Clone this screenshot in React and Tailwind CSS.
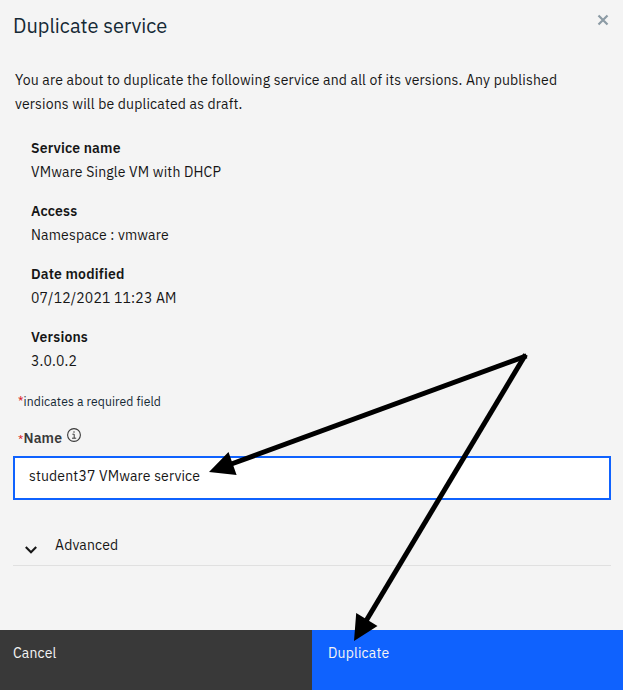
const details = [
  { label: 'Service name', value: 'VMware Single VM with DHCP' },
  { label: 'Access', value: 'Namespace : vmware' },
  { label: 'Date modified', value: '07/12/2021 11:23 AM' },
  { label: 'Versions', value: '3.0.0.2' },
];

function CloseIcon() {
  return (
    <svg className="size-3" viewBox="0 0 12 12" fill="none" stroke="#8c9ba5" strokeWidth="2.2">
      <path d="M1.5 1.5 10.5 10.5M10.5 1.5 1.5 10.5" />
    </svg>
  );
}

function InfoIcon() {
  return (
    <svg className="size-[14px]" viewBox="0 0 14 14" fill="none" stroke="#393939">
      <circle cx="7" cy="7" r="6.4" strokeWidth="1.1" />
      <path d="M5.4 6.2H7.2V10.2M5 10.2H9.2" strokeWidth="1" />
      <circle cx="7" cy="3.9" r="0.75" fill="#393939" stroke="none" />
    </svg>
  );
}

function ChevronIcon() {
  return (
    <svg className="h-2 w-3" viewBox="0 0 12 8" fill="none" stroke="#161616" strokeWidth="2.1">
      <path d="M0.8 1.1 6 6.3 11.2 1.1" />
    </svg>
  );
}

function Arrows() {
  return (
    <svg className="pointer-events-none absolute inset-0 h-[690px] w-[623px]" viewBox="0 0 623 690">
      <g stroke="#000" strokeWidth="5" fill="none">
        <path d="M526.5 355.8 230 464.5" />
        <path d="M525.6 354.5 366 621" />
      </g>
      <path d="M209 472 228.5 452 236.6 475ZM354 641 356.2 613 377.5 626Z" fill="#000" />
    </svg>
  );
}

export default function App() {
  return (
    <div className="relative flex h-[690px] w-[623px] flex-col overflow-hidden bg-[#f4f4f4] font-['IBM_Plex_Sans','Roboto','Liberation_Sans',sans-serif] text-sm tracking-[0.16px] text-[#161616]">
      <header className="flex h-[68px] items-start justify-between pt-[13px] pr-[14px] pl-[13px]">
        <h1 className="text-xl leading-[26px] tracking-normal text-[#152935]">Duplicate service</h1>
        <button type="button" aria-label="Close" className="mt-[1px]"><CloseIcon /></button>
      </header>

      <main className="flex grow flex-col pr-3 pl-[13px]">
        <p className="pl-0.5 leading-6 whitespace-nowrap">
          You are about to duplicate the following service and all of its versions. Any published
          <br />
          versions will be duplicated as draft.
        </p>

        <dl className="mt-5 flex flex-col gap-[15px] pl-[18px] leading-6">
          {details.map((d) => (
            <div key={d.label}>
              <dt className="font-semibold">{d.label}</dt>
              <dd>{d.value}</dd>
            </div>
          ))}
        </dl>

        <p className="mt-5 pl-[5px] text-[12.2px] leading-4 tracking-[0.09px] text-[#152935]">
          <span className="text-[#da1e28]">*</span>indicates a required field
        </p>

        <div className="mt-[19px] flex h-5 pl-[5px] leading-5">
          <label className="w-[45px] font-semibold whitespace-nowrap text-[#393939]">
            <span className="text-xs font-normal tracking-normal text-[#da1e28]">*</span>Name
          </label>
          <span className="ml-1"><InfoIcon /></span>
        </div>

        <div className="mt-[8px] flex h-11 items-center border-2 border-[#0f62fe] bg-white px-[14px] pb-1">
          student37 VMware service
        </div>

        <div className="mt-[26px] flex h-10 items-center border-b border-[#e0e0e0] pb-[2px] pl-3">
          <span className="mt-[10px]"><ChevronIcon /></span>
          <span className="ml-[18px]">Advanced</span>
        </div>
      </main>

      <footer className="flex h-[60px] shrink-0 leading-[18px] text-[#f4f4f4]">
        <button type="button" className="w-[312px] bg-[#393939] pb-[14px] pl-[13px] text-left">Cancel</button>
        <button type="button" className="grow bg-[#0f62fe] pb-[14px] pl-4 text-left">Duplicate</button>
      </footer>

      <Arrows />
    </div>
  );
}
